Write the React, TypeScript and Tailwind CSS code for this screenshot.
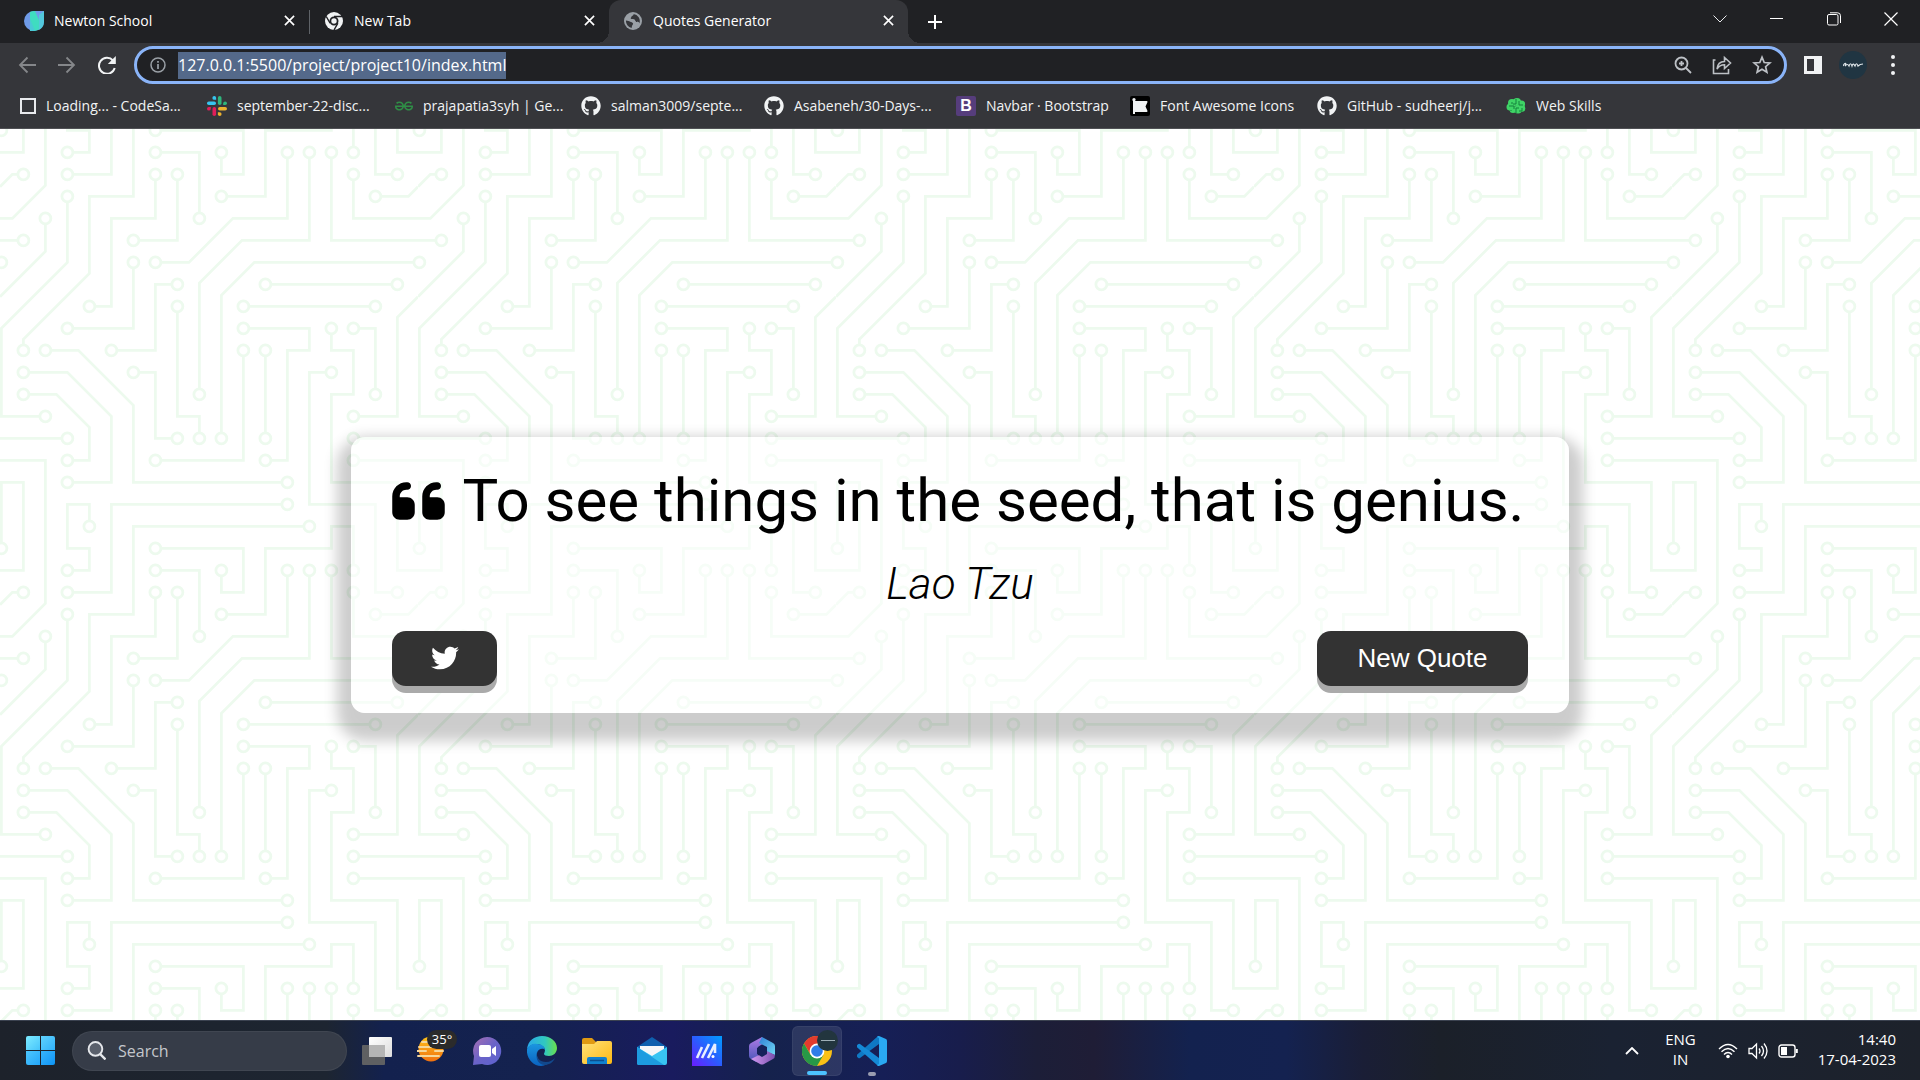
import React from "react";
import { FaTwitter, FaGithub } from "react-icons/fa";
import { FaFontAwesome, FaQuoteLeft } from "react-icons/fa6";
import { SiGeeksforgeeks } from "react-icons/si";

const UI = "font-['Open_Sans','Noto_Sans',sans-serif]";

/* ---------- circuit board wallpaper ---------- */

const TRACES = [
  "49,225 0,225", "209,273 81,273 81,304", "257,225 304,225", "257,241 304,241", "273,129 177,129",
  "17,81 0,81", "193,113 289,113", "257,17 257,0", "193,225 193,161", "241,17 241,81 304,81",
  "257,33 257,65 304,65", "129,129 129,209 145,209 145,225", "129,113 113,113 113,161 81,161",
  "113,241 177,241 177,161", "97,177 113,177 113,225 129,225", "65,289 65,273 49,273 49,304",
  "241,177 225,177 225,273 273,273 273,304", "257,145 273,145 273,193",
  "193,241 209,241 209,161 225,161 225,145 177,145", "289,33 273,33 273,0", "97,97 97,145 49,145",
  "49,33 81,33 81,0", "113,33 113,65 81,65 81,129 65,129", "97,81 129,81 129,33", "113,17 145,17 145,65",
  "225,289 97,289 97,304", "241,145 241,161 257,161 257,193 241,193 241,257 289,257 289,304",
  "49,17 65,17 65,1 48,1", "161,49 193,49 193,1 242,1", "113,1 177,1 177,33 161,33 161,17",
  "113,97 137.4,97 169.4,65 209,65 209,17", "145,193 145,112 176,81 225,81 225,17",
  "161,225 161,121 185,97 304,97", "17,161 17,153 65,105 65,49 97,49 97,0",
  "49,49 49,97 1,145 1,209 33,209", "33,65 33,89 0,122", "17,33 9,33 0,42", "273,49 297,49 304,42",
  "257,209 289,209 289,137 304,122", "49,241 65,241 65,217 41,193 17,193",
  "209,257 97,257 97,201 57,161 33,161", "49,257 81,257 81,209 49,177 17,177", "33,0 33,41 9,65 0,65",
  "1,304 1,257 17,257 17,304", "33,304 33,241 0,241", "0,17 17,17 17,0", "304,17 289,17 289,0",
  "257,304 257,289 241,289 241,304",
];

const NODES = [
  [49, 225], [209, 273], [257, 225], [257, 241], [273, 129], [177, 129], [17, 81], [193, 113], [289, 113],
  [257, 17], [193, 225], [193, 161], [241, 17], [257, 33], [129, 129], [145, 225], [129, 113], [81, 161],
  [113, 241], [177, 161], [97, 177], [129, 225], [65, 289], [241, 177], [257, 145], [273, 193], [193, 241],
  [177, 145], [289, 33], [97, 97], [49, 145], [49, 33], [113, 33], [65, 129], [97, 81], [129, 33], [113, 17],
  [145, 65], [225, 289], [241, 145], [49, 17], [161, 49], [113, 1], [161, 17], [113, 97], [209, 17],
  [145, 193], [225, 17], [161, 225], [305, 97], [1, 97], [17, 161], [49, 49], [33, 209], [33, 65], [17, 33],
  [273, 49], [257, 209], [49, 241], [17, 193], [209, 257], [33, 161], [49, 257], [17, 177], [1, 1], [305, 1],
  [1, 305], [305, 305], [113, 305],
];

function CircuitBoard() {
  return (
    <svg className="absolute inset-0 h-full w-full" aria-hidden="true">
      <defs>
        <pattern id="circuit" width="304" height="304" patternUnits="userSpaceOnUse" patternTransform="scale(1.375)">
          <g stroke="#edfaee" strokeWidth="2" fill="none">
            {TRACES.map((t) => (
              <polyline key={t} points={t} />
            ))}
          </g>
          <g stroke="#edfaee" strokeWidth="2" fill="#fff">
            {NODES.map(([x, y]) => (
              <circle key={`${x}-${y}`} cx={x} cy={y} r="4" />
            ))}
          </g>
        </pattern>
      </defs>
      <rect width="100%" height="100%" fill="url(#circuit)" />
    </svg>
  );
}

/* ---------- browser chrome icons ---------- */

function NewtonIcon() {
  return (
    <svg viewBox="0 0 20 20" className="h-5 w-5">
      <path d="M10 0h10v10a10 10 0 1 1-10-10z" fill="#6f9be8" />
      <path d="M6 1l9 17V4l5-4v10a10 10 0 0 1-5 9L6 10z" fill="#52c8dc" />
      <path d="M6 1q2-1 5-1l4 9v9l-1 1q-3 1-4 1L6 10z" fill="#3fdcc0" />
      <path d="M6 8l5 12H6z" fill="#49c9d6" />
    </svg>
  );
}

function ChromeMono() {
  return (
    <svg viewBox="0 0 20 20" className="h-[18px] w-[18px]">
      <circle cx="10" cy="10" r="10" fill="#f1f3f4" />
      <circle cx="10" cy="10" r="4" fill="#f1f3f4" stroke="#202124" strokeWidth="2" />
      <path d="M10 5h9M5.7 12.5L1.4 5M14.3 12.5L10 20" stroke="#202124" strokeWidth="1.6" fill="none" />
    </svg>
  );
}

function Globe() {
  return (
    <svg viewBox="0 0 18 18" className="h-[18px] w-[18px]">
      <circle cx="9" cy="9" r="9" fill="#9aa0a6" />
      <path d="M2 8.5c2 .2 3 .6 4.200 1.300 1 .6 2.200.5 2.800 1.500.4 1-.9 1.700-1 2.700l-.4 2.100A7.200 7.200 0 0 1 2 8.500z M9.500 1.900c.5 1-.6 1.500-1.500 2-.8.500-.5 1.500-1.300 2.100-.4.700 1.300 1.200 2.300 1.100 1.500 0 2 .9 2.400 1.900.6.900 2.200.3 3.200 1 .6.400.8.900.8 1.400a7.300 7.300 0 0 0-5.900-9.500z" fill="#35363a" />
    </svg>
  );
}

function Cross({ className }: { className: string }) {
  return (
    <svg viewBox="0 0 12 12" className={className} stroke="currentColor" strokeWidth="1.800" fill="none">
      <path d="M1 1l10 10M11 1L1 11" />
    </svg>
  );
}

function SlackIcon() {
  return (
    <svg viewBox="0 0 20 20" className="h-5 w-5">
      <g fill="#36c5f0"><rect x="0" y="5.500" width="9" height="3.600" rx="1.800" /><path d="M7.300 0a1.800 1.800 0 0 1 1.800 1.800v2H7.300a1.800 1.800 0 0 1 0-3.800z" /></g>
      <g fill="#2eb67d"><rect x="10.900" y="0" width="3.600" height="9" rx="1.800" /><path d="M20 7.300a1.800 1.800 0 0 1-1.800 1.800h-2V7.300a1.800 1.800 0 0 1 3.800 0z" /></g>
      <g fill="#ecb22e"><rect x="11" y="10.900" width="9" height="3.600" rx="1.800" /><path d="M12.700 20a1.800 1.800 0 0 1-1.800-1.800v-2h1.800a1.800 1.800 0 0 1 0 3.800z" /></g>
      <g fill="#e01e5a"><rect x="5.500" y="11" width="3.600" height="9" rx="1.800" /><path d="M0 12.700a1.800 1.800 0 0 1 1.800-1.800h2v1.800a1.800 1.800 0 0 1-3.800 0z" /></g>
    </svg>
  );
}

function WebSkillsIcon() {
  return (
    <svg viewBox="0 0 20 20" className="h-5 w-5">
      <g fill="#3fd466">
        <circle cx="6" cy="7" r="4" /><circle cx="11" cy="6" r="4" /><circle cx="15.500" cy="8" r="3.600" />
        <circle cx="4" cy="11" r="3.500" /><circle cx="7" cy="13.500" r="3.500" /><circle cx="12" cy="13.500" r="4" /><circle cx="16" cy="12.500" r="3.300" />
      </g>
      <path d="M10 3v5H7M13 5v4h4M3 10h5v3M10 17v-5h3M16 12v3h-3M5 7h2M5 14v1" stroke="#15803d" strokeWidth="1" fill="none" />
    </svg>
  );
}

const BOOKMARKS: { label: string; icon: React.ReactNode; width: string }[] = [
  { label: "Loading... - CodeSa...", width: "w-[166px]", icon: <span className="h-4 w-4 border-2 border-[#e8eaed]" /> },
  { label: "september-22-disc...", width: "w-[167px]", icon: <SlackIcon /> },
  { label: "prajapatia3syh | Ge...", width: "w-[165px]", icon: <SiGeeksforgeeks className="h-[18px] w-[18px] text-[#2f8d46]" /> },
  { label: "salman3009/septe...", width: "w-[162px]", icon: <FaGithub className="h-5 w-5" /> },
  { label: "Asabeneh/30-Days-...", width: "w-[171px]", icon: <FaGithub className="h-5 w-5" /> },
  {
    label: "Navbar · Bootstrap", width: "w-[153px]",
    icon: <span className="flex h-5 w-5 items-center justify-center rounded-xs bg-[#563d7c] font-['Liberation_Sans',sans-serif] text-base leading-5 font-bold text-white">B</span>,
  },
  {
    label: "Font Awesome Icons", width: "w-[166px]",
    icon: <span className="flex h-5 w-5 items-center justify-center rounded-xs bg-black"><FaFontAwesome className="h-4 w-4" /></span>,
  },
  { label: "GitHub - sudheerj/j...", width: "w-[168px]", icon: <FaGithub className="h-5 w-5" /> },
  { label: "Web Skills", width: "w-[120px]", icon: <WebSkillsIcon /> },
];

function Tab({ title, icon, active }: { title: string; icon: React.ReactNode; active?: boolean }) {
  return (
    <div className={`relative flex h-full w-[299px] items-center pr-3 pb-[2px] pl-[14px] ${active ? "rounded-t-xl bg-[#35363a]" : ""}`}>
      {active && (
        <>
          <span className="absolute bottom-0 -left-3 h-3 w-3 bg-[radial-gradient(circle_at_0_0,#202124_12px,#35363a_12px)]" />
          <span className="absolute -right-3 bottom-0 h-3 w-3 bg-[radial-gradient(circle_at_100%_0,#202124_12px,#35363a_12px)]" />
        </>
      )}
      <span className="flex w-5 justify-center">{icon}</span>
      <span className="ml-[10px] flex-1 text-sm leading-5">{title}</span>
      <button aria-label={`Close ${title}`} className="flex h-4 w-4 items-center justify-center">
        <Cross className="h-[11px] w-[11px]" />
      </button>
    </div>
  );
}

function TabStrip() {
  return (
    <div className="flex h-[43px] bg-[#202124] text-white">
      <div className="w-[10px]" />
      <Tab title="Newton School" icon={<NewtonIcon />} />
      <span className="mt-[10px] h-6 w-px bg-[#5f6368]" />
      <Tab title="New Tab" icon={<ChromeMono />} />
      <Tab title="Quotes Generator" icon={<Globe />} active />
      <button aria-label="New tab" className="ml-[19px] flex w-4 items-center">
        <svg viewBox="0 0 16 16" className="h-4 w-4" stroke="currentColor" strokeWidth="2" fill="none"><path d="M8 1v14M1 8h14" /></svg>
      </button>
      <div className="ml-auto flex h-[37px] text-[#e8eaed]">
        <button aria-label="Search tabs" className="flex w-[57px] items-center justify-center">
          <svg viewBox="0 0 14 8" className="h-2 w-[14px]" stroke="currentColor" fill="none"><path d="M.5.5L7 7 13.500.5" /></svg>
        </button>
        <button aria-label="Minimize" className="flex w-[57px] items-center justify-center"><span className="h-px w-[13px] bg-white" /></button>
        <button aria-label="Restore" className="flex w-[57px] items-center justify-center">
          <svg viewBox="0 0 14 14" className="h-[14px] w-[14px]" stroke="#fff" fill="none"><rect x=".5" y="2.500" width="10.500" height="10.500" rx="1.500" /><path d="M3 .8h7.500a3 3 0 0 1 3 3V11" /></svg>
        </button>
        <button aria-label="Close window" className="flex w-[58px] items-center justify-center">
          <svg viewBox="0 0 14 14" className="h-[14px] w-[14px]" stroke="#fff" strokeWidth="1.200" fill="none"><path d="M.5.5l13 13M13.500.5l-13 13" /></svg>
        </button>
      </div>
    </div>
  );
}

function Toolbar() {
  return (
    <div className="flex h-[44px] items-center bg-[#35363a] pr-[25px] pl-[18px] text-[#f1f3f4]">
      <button aria-label="Back" className="mr-[22px] text-[#85878a]">
        <svg viewBox="0 0 18 18" className="h-[18px] w-[18px]" stroke="currentColor" strokeWidth="1.800" fill="none"><path d="M18 9H2M9.500 1.500L2 9l7.500 7.500" /></svg>
      </button>
      <button aria-label="Forward" className="mr-[22px] text-[#85878a]">
        <svg viewBox="0 0 18 18" className="h-[18px] w-[18px]" stroke="currentColor" strokeWidth="1.800" fill="none"><path d="M0 9h16M8.500 1.500L16 9l-7.500 7.500" /></svg>
      </button>
      <button aria-label="Reload" className="mr-[18px]">
        <svg viewBox="0 0 18 18" className="h-[18px] w-[18px]"><path d="M15 4.500A8 8 0 1 0 16.700 12" fill="none" stroke="currentColor" strokeWidth="2" /><path d="M17.800 0v8h-8z" fill="currentColor" /></svg>
      </button>
      <div className="flex h-[38px] flex-1 items-center rounded-full border-[3px] border-[#8ab4f8] bg-[#202124] pr-3 pl-[13px]">
        <svg viewBox="0 0 16 16" className="h-4 w-4" fill="none" stroke="#9aa0a6" strokeWidth="1.500"><circle cx="8" cy="8" r="7" /><path d="M8 7v5M8 4v1.800" strokeWidth="1.700" /></svg>
        <input
          aria-label="Address"
          defaultValue="127.0.0.1:5500/project/project10/index.html"
          className="ml-3 h-[27px] field-sizing-content bg-[#54698a] text-base leading-6 text-white outline-none"
        />
        <div className="ml-auto flex items-center gap-5 text-[#bdc1c6]">
          <button aria-label="Zoom">
            <svg viewBox="0 0 18 18" className="h-[18px] w-[18px]" fill="none" stroke="currentColor" strokeWidth="1.800"><circle cx="7.500" cy="7.500" r="6" /><path d="M12 12l5 5M7.500 5v5M5 7.500h5" /></svg>
          </button>
          <button aria-label="Share">
            <svg viewBox="0 0 20 20" className="h-5 w-5" fill="none" stroke="currentColor" strokeWidth="1.600"><path d="M3.500 5H1.500v13.500h15V14" /><path d="M5 14c.5-5 3.500-7.500 7.500-7.500V2.500L18.500 8l-6 5.500v-3.700C9 9.800 6.800 11 5 14z" /></svg>
          </button>
          <button aria-label="Bookmark this page">
            <svg viewBox="0 0 20 20" className="h-5 w-5" fill="none" stroke="currentColor" strokeWidth="1.700"><path d="M10 2.200l2.200 5.300 5.700.5-4.300 3.700 1.300 5.600-4.900-3-4.900 3 1.300-5.600L2.100 8l5.700-.5z" /></svg>
          </button>
        </div>
      </div>
      <button aria-label="Side panel" className="ml-[17px] h-[18px] w-[18px] border-[3px] border-r-[8px] border-[#f1f3f4]" />
      <button aria-label="Profile" className="ml-[17px] flex h-7 w-7 items-center justify-center rounded-full bg-[#203542]">
        <svg viewBox="0 0 20 6" className="h-[6px] w-5" fill="none" stroke="#dfe6ea" strokeWidth="1.200"><path d="M0 4c2-4 4-3 2 0 2-2 3-2 4 0 1-3 2-3 3 0 1-3 2-2 3 0 1-3 2-3 3 0 1-1 3-2 5-2" /></svg>
      </button>
      <button aria-label="Menu" className="ml-6 flex w-1 flex-col gap-1">
        <span className="h-1 w-1 rounded-full bg-[#f1f3f4]" />
        <span className="h-1 w-1 rounded-full bg-[#f1f3f4]" />
        <span className="h-1 w-1 rounded-full bg-[#f1f3f4]" />
      </button>
    </div>
  );
}

function BookmarkBar() {
  return (
    <nav className="flex h-[42px] gap-[21px] border-b border-[#505155] bg-[#35363a] pb-1 pl-5 text-[#f1f3f4]">
      {BOOKMARKS.map((b) => (
        <a key={b.label} href="#" className={`flex shrink-0 items-center gap-[10px] text-sm leading-5 whitespace-nowrap ${b.width}`}>
          <span className="flex shrink-0">{b.icon}</span>
          {b.label}
        </a>
      ))}
    </nav>
  );
}

/* ---------- page ---------- */

function QuoteCard() {
  return (
    <div className="relative min-w-[1218px] rounded-[14px] bg-white/50 px-[41px] pt-7 pb-[27px] shadow-[0_14px_14px_14px_rgba(0,0,0,0.2)]">
      <div className="flex items-center text-[60px] leading-[72px] text-black">
        <FaQuoteLeft className="h-[60px] w-[53px] shrink-0" />
        <span className="ml-[14px] flex-1 text-center whitespace-nowrap">To see things in the seed, that is genius.</span>
      </div>
      <p className="mt-5 text-center text-[44px] leading-[54px] font-light text-black italic">Lao Tzu</p>
      <div className="mt-5 flex justify-between">
        <button aria-label="Tweet this quote" className="flex h-[55px] w-[105px] items-center justify-center rounded-[14px] bg-[#333] text-white shadow-[0_7px_0_#aaa]">
          <FaTwitter className="h-7 w-7" />
        </button>
        <button className="h-[55px] w-[211px] rounded-[14px] bg-[#333] font-['Liberation_Sans',sans-serif] text-[26px] text-white shadow-[0_7px_0_#aaa]">
          New Quote
        </button>
      </div>
    </div>
  );
}

/* ---------- taskbar ---------- */

const BOX = "h-[30px] w-[30px]";

const APPS: { name: string; icon: React.ReactNode; state?: "active" | "running" }[] = [
  {
    name: "Task view",
    icon: (
      <svg viewBox="0 0 30 30" className={BOX}>
        <defs><linearGradient id="tv" x2="1" y2="1"><stop stopColor="#fff" /><stop offset="1" stopColor="#dcdcdc" /></linearGradient></defs>
        <rect x="0" y="9" width="23" height="20" rx="1" fill="#5f6062" />
        <rect x="7" y="1" width="23" height="20" rx="1" fill="url(#tv)" />
        <rect x="7" y="9" width="16" height="12" fill="#b5b5b5" />
      </svg>
    ),
  },
  {
    name: "Weather",
    icon: (
      <span className="relative block">
        <svg viewBox="0 0 30 30" className={BOX}>
          <defs><linearGradient id="sun" x2="0" y2="1"><stop stopColor="#ffc21a" /><stop offset="1" stopColor="#f0700f" /></linearGradient></defs>
          <circle cx="14" cy="13" r="12.500" fill="url(#sun)" />
          <path d="M5 6h7M0 15h9M18 15h8M2 11h14M1 20h21" stroke="#f6d79a" strokeWidth="2" strokeLinecap="round" />
        </svg>
        <span className="absolute -top-[6px] left-[10px] flex h-[19px] w-[30px] items-center justify-center rounded-full bg-[#2b2b2b] text-[13px] leading-none text-white">35°</span>
      </span>
    ),
  },
  {
    name: "Chat",
    icon: (
      <svg viewBox="0 0 30 30" className={BOX}>
        <defs><linearGradient id="chat" x1="0" x2="1" y2="1"><stop stopColor="#a86fb0" /><stop offset=".5" stopColor="#6a63c8" /><stop offset="1" stopColor="#5b62d0" /></linearGradient></defs>
        <path d="M15 1a14 14 0 1 1-5 27L1 29l1-9A14 14 0 0 1 15 1z" fill="url(#chat)" />
        <rect x="7" y="9" width="12" height="12" rx="2" fill="#fff" /><path d="M20 13l4-3v10l-4-3z" fill="#fff" />
      </svg>
    ),
  },
  {
    name: "Edge",
    icon: (
      <svg viewBox="0 0 30 30" className={BOX}>
        <defs>
          <linearGradient id="e1" x1="0" x2="1"><stop stopColor="#2aa8ea" /><stop offset=".6" stopColor="#31c8c0" /><stop offset="1" stopColor="#6be04a" /></linearGradient>
          <linearGradient id="e2" x2="0" y2="1"><stop stopColor="#1b96e0" /><stop offset="1" stopColor="#0a62c0" /></linearGradient>
        </defs>
        <path d="M0 13C1 5 7 0 15 0c9 0 15 6 15 12 0 5-4 8-8 8-3 0-5-1-5-2 0-1 1-2 1-4 0-3-4-6-9-6-4 0-7 2-9 5z" fill="url(#e1)" />
        <path d="M0 13c2-4 6-6 10-5 5 0 8 3 8 6-1-2-7-2-8 3-1 6 4 11 10 11-2 1-4 2-6 2C6 30-1 22 0 13z" fill="url(#e2)" />
        <path d="M10 16c-1 6 3 10 9 10 4 0 7-2 9-4-2 5-7 7-10 7-6 0-10-6-8-13z" fill="#12488c" />
      </svg>
    ),
  },
  {
    name: "File Explorer",
    icon: (
      <svg viewBox="0 0 30 30" className={BOX}>
        <defs><linearGradient id="fe" x2="1" y2="1"><stop stopColor="#ffe27a" /><stop offset="1" stopColor="#fdb913" /></linearGradient></defs>
        <path d="M0 4q0-2 2-2h8l4 4v4H0z" fill="#e09a12" />
        <path d="M0 8h12l3-3h13q2 0 2 2v19q0 2-2 2H2q-2 0-2-2z" fill="url(#fe)" />
        <path d="M5 28v-5q0-2 2-2h16q2 0 2 2v5z" fill="#1181cf" /><path d="M8 24.500h14" stroke="#0c4f8f" strokeWidth="1.500" />
      </svg>
    ),
  },
  {
    name: "Mail",
    icon: (
      <svg viewBox="0 0 30 30" className={BOX}>
        <path d="M0 11L15 1l15 10v3H0z" fill="#0f5fae" />
        <path d="M3 10h24v8L15 22 3 18z" fill="#f5f6f8" />
        <path d="M0 11l15 9 15-9v16q0 2-2 2H2q-2 0-2-2z" fill="#38c4f2" />
        <path d="M0 11l27 18H2q-2 0-2-2z" fill="#1d9be0" />
      </svg>
    ),
  },
  {
    name: "MyASUS",
    icon: (
      <svg viewBox="0 0 30 30" className={BOX}>
        <defs><linearGradient id="ma" x1="1" x2="0" y2="1"><stop stopColor="#009dff" /><stop offset=".5" stopColor="#2b5cff" /><stop offset="1" stopColor="#6a1cff" /></linearGradient></defs>
        <rect width="30" height="30" fill="url(#ma)" />
        <path d="M5 22L10 11M10 22l7-14M16 22l7-14v9" stroke="#e8efff" strokeWidth="2.600" fill="none" /><circle cx="21" cy="20.500" r="1.500" fill="#fff" />
      </svg>
    ),
  },
  {
    name: "Microsoft 365",
    icon: (
      <svg viewBox="0 0 30 30" className={BOX}>
        <defs>
          <linearGradient id="m1" x2="0" y2="1"><stop stopColor="#b07be6" /><stop offset="1" stopColor="#4655b8" /></linearGradient>
          <linearGradient id="m2" x2="1" y2="1"><stop stopColor="#2f7fd6" /><stop offset="1" stopColor="#6fd8f5" /></linearGradient>
          <linearGradient id="m3" x2="1"><stop stopColor="#d29af0" /><stop offset="1" stopColor="#7a4fae" /></linearGradient>
        </defs>
        <path d="M15 1L4 7q-2 1-2 3v10q0 2 2 3l5 3 2-6V11l6-4z" fill="url(#m1)" />
        <path d="M15 1l11 6q2 1 2 3v9l-8-3v-5l-8-4z" fill="url(#m2)" />
        <path d="M4 23l8-4 8-4 8 4q0 3-2 4l-9 5q-2 1-4 0z" fill="url(#m3)" />
        <path d="M15 9l5 3v6l-5 3-5-3v-6z" fill="#15215a" />
      </svg>
    ),
  },
  {
    name: "Google Chrome",
    state: "active",
    icon: (
      <span className="relative block">
        <svg viewBox="0 0 30 30" className={BOX}>
          <circle cx="15" cy="15" r="15" fill="#fbc116" />
          <path d="M2 7.500A15 15 0 0 1 28 7.500H15L8.700 18.600z" fill="#e33b2e" />
          <path d="M2 7.500A15 15 0 0 0 15 30l6.500-11.300H8.500z" fill="#279847" />
          <circle cx="15" cy="15" r="7.400" fill="#fff" /><circle cx="15" cy="15" r="5.800" fill="#2f7de9" />
        </svg>
        <span className="absolute -top-[6px] left-[15px] flex h-[21px] w-[21px] items-center justify-center rounded-full bg-[#22353e]"><span className="h-px w-[14px] bg-[#9fb0b8]" /></span>
      </span>
    ),
  },
  {
    name: "Visual Studio Code",
    state: "running",
    icon: (
      <svg viewBox="0 0 30 30" className={BOX}>
        <path d="M22 0v8L3 22q-1 .6-2-.3l-1-1q-.8-1 0-2L20 1q1-1 2-1z" fill="#0f79c4" />
        <path d="M22 30v-8L3 8q-1-.6-2 .3l-1 1q-.8 1 0 2L20 29q1 1 2 1z" fill="#1589d6" />
        <path d="M22 0l7 3q1 .6 1 2v20q0 1.400-1 2l-7 3q-1.500 0-2-1l2-1V2l-2-1q.5-1 2-1z" fill="#2aa9f2" />
      </svg>
    ),
  },
];

function Taskbar() {
  return (
    <footer className="flex h-[60px] items-center border-t border-[#3b4250] bg-[linear-gradient(90deg,#1d222b_0%,#1d2531_17%,#13214e_20%,#14224f_28%,#191b5e_35%,#15224c_40%,#161f56_46%,#181d4c_50%,#1c1e38_54%,#1f1d36_57%,#13224f_62%,#142250_67%,#1a1e36_71%,#1b2029_75%,#1a2232_84%,#1d222b_100%)] text-white">
      <button aria-label="Start" className="ml-[26px] grid h-[29px] w-[29px] grid-cols-2 gap-px">
        <span className="rounded-tl-xs bg-linear-to-br from-[#7cebff] to-[#45c4fb]" /><span className="rounded-tr-xs bg-linear-to-br from-[#5fd2fd] to-[#2fb2fb]" />
        <span className="rounded-bl-xs bg-linear-to-br from-[#4cc6fc] to-[#22a6f9]" /><span className="rounded-br-xs bg-linear-to-br from-[#36b4fb] to-[#0a94f5]" />
      </button>
      <label className="ml-[17px] flex h-10 w-[275px] items-center rounded-full border border-white/5 bg-[#363c48] pl-[14px]">
        <svg viewBox="0 0 18 18" className="h-[19px] w-[19px]" fill="none" stroke="#e6e8ec" strokeWidth="1.800"><circle cx="8" cy="7.500" r="6.500" fill="#5a606c" /><path d="M12.500 12.500l5 5" strokeWidth="2.200" /></svg>
        <input aria-label="Search" placeholder="Search" className="ml-3 w-40 bg-transparent text-base outline-none placeholder:text-[#c4c7cc]" />
      </label>
      <div className="ml-[5px] flex gap-[5px]">
        {APPS.map((a) => (
          <button key={a.name} aria-label={a.name} className={`relative flex h-[50px] w-[50px] items-center justify-center rounded-md ${a.state === "active" ? "border border-white/5 bg-white/10" : ""}`}>
            {a.icon}
            {a.state === "active" && <span className="absolute bottom-0 h-1 w-5 rounded-full bg-[#4cc2ff]" />}
            {a.state === "running" && <span className="absolute bottom-0 h-1 w-2 rounded-full bg-[#9a9db0]" />}
          </button>
        ))}
      </div>
      <div className="ml-auto flex items-center pr-6 text-[15px] leading-5">
        <button aria-label="Show hidden icons">
          <svg viewBox="0 0 14 8" className="h-2 w-[14px]" fill="none" stroke="currentColor" strokeWidth="1.800"><path d="M1 7l6-6 6 6" /></svg>
        </button>
        <button className="ml-[26px] pb-[3px] text-center">ENG<br />IN</button>
        <button aria-label="Network, volume and battery" className="ml-[22px] flex items-center gap-[10px]">
          <svg viewBox="0 0 20 16" className="h-4 w-5" fill="none" stroke="currentColor" strokeWidth="1.400"><path d="M1 6q9-9 18 0M3.500 8.800q6.500-6.500 13 0M6 11.500q4-4 8 0" /><circle cx="10" cy="13.500" r="1.800" fill="currentColor" stroke="none" /></svg>
          <svg viewBox="0 0 20 18" className="h-[18px] w-5" fill="none" stroke="currentColor" strokeWidth="1.300"><path d="M1 6.500h3L8.500 2v14L4 11.500H1z" /><path d="M11 6.500q2 2.500 0 5M13.500 4q4 5 0 10M16 1.500q6 7.500 0 15" /></svg>
          <svg viewBox="0 0 20 14" className="h-[14px] w-5" fill="none" stroke="currentColor" strokeWidth="1.400"><rect x="1" y="1" width="16" height="12" rx="2.500" /><rect x="3" y="3" width="6" height="8" fill="currentColor" stroke="none" /><path d="M18.800 5v4" strokeWidth="2" /></svg>
        </button>
        <button className="ml-5 pb-[3px] text-right">14:40<br />17-04-2023</button>
      </div>
    </footer>
  );
}

export default function App() {
  return (
    <div className={`flex min-h-screen flex-col bg-white ${UI}`}>
      <header>
        <TabStrip />
        <Toolbar />
        <BookmarkBar />
      </header>
      <main className="relative flex flex-1 items-center justify-center font-[Roboto,sans-serif]">
        <CircuitBoard />
        <QuoteCard />
      </main>
      <Taskbar />
    </div>
  );
}
